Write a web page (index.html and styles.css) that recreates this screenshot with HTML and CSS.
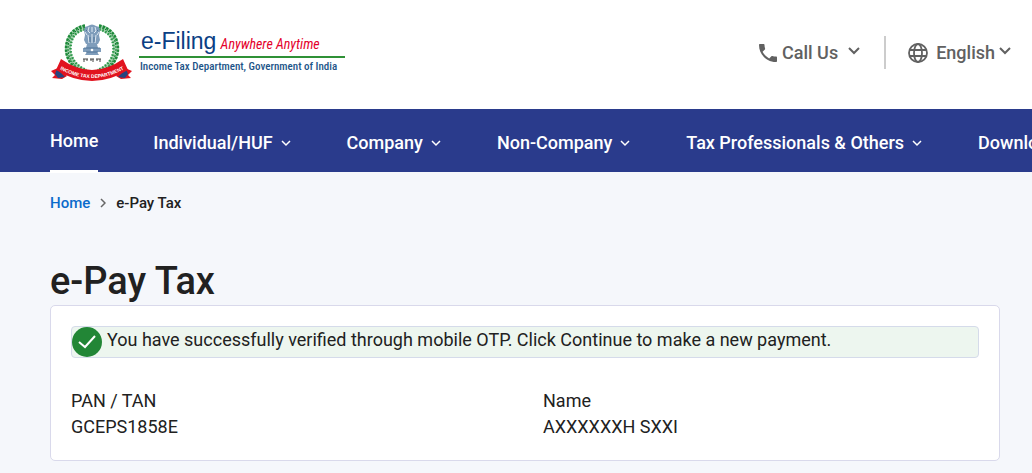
FILE: index.html
```html
<!DOCTYPE html>
<html lang="en">
<head>
    <meta charset="UTF-8">
    <meta name="viewport" content="width=device-width, initial-scale=1.0">
    <title>e-Pay Tax</title>
    <link rel="stylesheet" href="styles.css">
</head>
<body>
    <header class="header">
        <a class="logo" href="#">
            <svg class="emblem" viewBox="0 0 83 58" aria-hidden="true">
                <!-- wreath -->
                <g fill="none">
                    <path d="M35 3.500C24 5 18 14 18 25s8 20 18 23M49 3.500C60 5 66 14 66 25s-8 20-18 23" stroke="#a9d6b2" stroke-width="6"/>
                    <path d="M35 1.500C22 4 16 14 16 25s8 21 20 24M49 1.500C62 4 68 14 68 25s-8 21-20 24" stroke="#1d8a3a" stroke-width="2.500" stroke-dasharray="2.500 1.200"/>
                    <path d="M35 5.500C25 7 20.500 15 20.500 25s7 18 16 21M49 5.500C59 7 63.500 15 63.500 25s-7 18-16 21" stroke="#2b9648" stroke-width="2.500" stroke-dasharray="1.600 1.600"/>
                    <path d="M35 3.500C24 5 18 14 18 25s8 20 18 23M49 3.500C60 5 66 14 66 25s-8 20-18 23" stroke="#0f7a2e" stroke-width="1" stroke-dasharray="2 1"/>
                </g>
                <!-- lion capital -->
                <g fill="#7f9dbb">
                    <path d="M38 2q4-3 8 0l3 1 1 4-1 4 1 5-2 4H36l-2-4 1-5-1-4 1-4z"/>
                    <path d="M37 20h10l1 4H36zM33 24h18v4H33zM37 28h10l2 3H35z"/>
                </g>
                <path d="M39 3l-1 4 2 2M45 3l1 4-2 2M42 3v5M38 11l1 8M42 10v9M46 11l-1 8M35 8l2 3M49 8l-2 3" stroke="#dfe9f3" fill="none"/>
                <path d="M36 6l1 1M47 7l1-1M40 13v5M44 13v5M34 24h16M36 28h12" stroke="#45698f" stroke-width=".8" fill="none"/>
                <circle cx="42" cy="26" r="1.300" fill="#fff"/>
                <path d="M33 35h5M40 35h4M46 35h5M34 35v3M37 35v2M41 35v2M43 35v3M47 35v2M50 35v3" stroke="#444" fill="none"/>
                <!-- ribbon -->
                <path d="M1 47l7-3 9 8-5 3-10-1 3-3zM82 47l-7-3-9 8 5 3 10-1-3-3z" fill="#e1131f"/>
                <path d="M7 45l8 8-7 1-3-4zM76 45l-8 8 7 1 3-4z" fill="#26457f"/>
                <path d="M11 35q31 22 62 0l5 11q-36 22-72 0z" fill="#e1131f"/>
                <path id="curve" d="M6 43q36 22 72 0" fill="none"/>
                <text class="ribbon-text"><textPath href="#curve" startOffset="50%">INCOME TAX DEPARTMENT</textPath></text>
            </svg>
            <span class="brand">
                <span class="brand-top"><span class="brand-name">e-Filing</span> <em class="brand-tag">Anywhere Anytime</em></span>
                <span class="brand-dept">Income Tax Department, Government of India</span>
            </span>
        </a>
        <div class="tools">
            <button class="tool call" type="button">
                <svg class="phone" viewBox="0 0 24 24" aria-hidden="true"><path d="M6.6 10.8c1.4 2.8 3.8 5.1 6.6 6.6l2.2-2.2c.3-.3.7-.4 1-.2 1.1.4 2.3.6 3.6.6.6 0 1 .4 1 1V20c0 .6-.4 1-1 1C10.600 21 3 13.400 3 4c0-.6.4-1 1-1h3.500c.6 0 1 .4 1 1 0 1.300.2 2.500.6 3.600.1.300 0 .7-.2 1z"/></svg>
                <span>Call Us</span>
                <svg class="tool-arrow" viewBox="0 0 12 8" aria-hidden="true"><path d="M1 1l5 5 5-5"/></svg>
            </button>
            <button class="tool language" type="button">
                <svg class="globe" viewBox="0 0 20 20" aria-hidden="true"><circle cx="10" cy="10" r="9"/><ellipse cx="10" cy="10" rx="4" ry="9"/><path d="M2 7h16M2 13h16"/></svg>
                <span>English</span>
                <svg class="tool-arrow" viewBox="0 0 12 8" aria-hidden="true"><path d="M1 1l5 5 5-5"/></svg>
            </button>
        </div>
    </header>

    <nav class="nav">
        <a class="nav-link active" href="#">Home</a>
        <a class="nav-link" href="#">Individual/HUF <svg class="nav-arrow" viewBox="0 0 16 16" aria-hidden="true"><path d="M4 6l4 4 4-4"/></svg></a>
        <a class="nav-link" href="#">Company <svg class="nav-arrow" viewBox="0 0 16 16" aria-hidden="true"><path d="M4 6l4 4 4-4"/></svg></a>
        <a class="nav-link" href="#">Non-Company <svg class="nav-arrow" viewBox="0 0 16 16" aria-hidden="true"><path d="M4 6l4 4 4-4"/></svg></a>
        <a class="nav-link" href="#">Tax Professionals &amp; Others <svg class="nav-arrow" viewBox="0 0 16 16" aria-hidden="true"><path d="M4 6l4 4 4-4"/></svg></a>
        <a class="nav-link" href="#">Downloads</a>
    </nav>

    <main class="content">
        <div class="breadcrumb">
            <a href="#">Home</a>
            <svg class="crumb-arrow" viewBox="0 0 6 10" aria-hidden="true"><path d="M1 1l4 4-4 4"/></svg>
            <span>e-Pay Tax</span>
        </div>
        <h1>e-Pay Tax</h1>
        <section class="card">
            <div class="alert">
                <svg class="check" viewBox="0 0 30 30" aria-hidden="true"><circle cx="15" cy="15" r="15"/><path d="M7 15l6 5L23 9"/></svg>
                <span>You have successfully verified through mobile OTP. Click Continue to make a new payment.</span>
            </div>
            <dl class="details">
                <div>
                    <dt>PAN / TAN</dt>
                    <dd>GCEPS1858E</dd>
                </div>
                <div>
                    <dt>Name</dt>
                    <dd>AXXXXXXH SXXI</dd>
                </div>
            </dl>
        </section>
    </main>
</body>
</html>
```
FILE: styles.css
```css
body {
    margin: 0;
    font-family: Roboto, sans-serif;
    font-size: 18px;
    color: #212121;
    background-color: #f5f7fb;
    overflow-x: hidden;
}
a {
    text-decoration: none;
}
.header {
    display: flex;
    justify-content: space-between;
    align-items: center;
    height: 109px;
    padding: 0 21px 4px 50px;
    box-sizing: border-box;
    background-color: #fff;
}
.logo {
    display: flex;
    align-items: center;
    gap: 6px;
}
.emblem {
    width: 83px;
    height: 58px;
}
.ribbon-text {
    font: bold 5px "Liberation Sans", sans-serif;
    fill: #fff;
    text-anchor: middle;
}
.brand {
    display: flex;
    flex-direction: column;
    font-family: "Roboto Condensed", "Liberation Sans", sans-serif;
    white-space: nowrap;
}
.brand-top {
    padding: 4px 2px 0;
    line-height: 24px;
    border-bottom: 2px solid #2f9136;
}
.brand-name {
    font-family: "Liberation Sans", sans-serif;
    font-size: 23px;
    color: #0a4084;
}
.brand-tag {
    font-size: 14px;
    color: #e4002b;
}
.brand-dept {
    padding: 0 8px 4px 1px;
    font-size: 11px;
    font-weight: 500;
    line-height: 18px;
    color: #1c5488;
}
.tools {
    display: flex;
    align-items: center;
}
.tool {
    display: flex;
    align-items: center;
    padding: 0;
    border: none;
    background: none;
    font-family: inherit;
    font-size: 18px;
    font-weight: 500;
    line-height: 33px;
    color: #616161;
}
.call {
    gap: 2px;
}
.call .tool-arrow {
    margin-left: 8px;
}
.language {
    gap: 4px;
    margin-left: 24px;
    padding-left: 22px;
    border-left: 2px solid #ccc;
}
.phone {
    width: 24px;
    height: 24px;
    fill: #616161;
}
.globe {
    width: 20px;
    height: 20px;
    margin-right: 4px;
    fill: none;
    stroke: #616161;
    stroke-width: 1.8;
}
.tool-arrow {
    width: 12px;
    height: 8px;
    margin-bottom: 4px;
    fill: none;
    stroke: #616161;
    stroke-width: 2;
}
.nav {
    display: flex;
    gap: 53px;
    height: 63px;
    padding-left: 50px;
    background-color: #2a3b8c;
}
.nav-link {
    display: flex;
    flex-shrink: 0;
    align-items: center;
    gap: 5px;
    padding-top: 4px;
    font-weight: 500;
    color: #fff;
}
.nav-link.active {
    margin: 0 2px -1px 0;
    padding-top: 2px;
    border-bottom: 3px solid #fff;
}
.nav-arrow {
    width: 16px;
    height: 16px;
    fill: none;
    stroke: #fff;
    stroke-width: 1.5;
}
.content {
    padding: 20px 32px 12px 50px;
}
.breadcrumb {
    display: flex;
    align-items: center;
    gap: 10px;
    font-size: 15px;
    font-weight: 500;
    line-height: 22px;
}
.breadcrumb a {
    color: #0b6bcb;
}
.crumb-arrow {
    width: 6px;
    height: 10px;
    fill: none;
    stroke: #666;
    stroke-width: 1.5;
}
h1 {
    margin: 43px 0 0;
    font-size: 38px;
    font-weight: 500;
    line-height: 48px;
}
.card {
    padding: 20px;
    border: 1px solid #d9d9eb;
    border-radius: 5px;
    background-color: #fff;
}
.alert {
    display: flex;
    gap: 5px;
    border: 1px solid #d5dbea;
    border-radius: 4px;
    background-color: #edf6ef;
    line-height: 26px;
}
.check {
    flex-shrink: 0;
    width: 30px;
    height: 30px;
    fill: #228636;
}
.check path {
    fill: none;
    stroke: #fff;
    stroke-width: 2;
}
.details {
    display: grid;
    grid-template-columns: 1fr 1fr;
    gap: 36px;
    margin: 30px 0 0;
    line-height: 26px;
}
.details dd {
    margin: 0;
}
```
